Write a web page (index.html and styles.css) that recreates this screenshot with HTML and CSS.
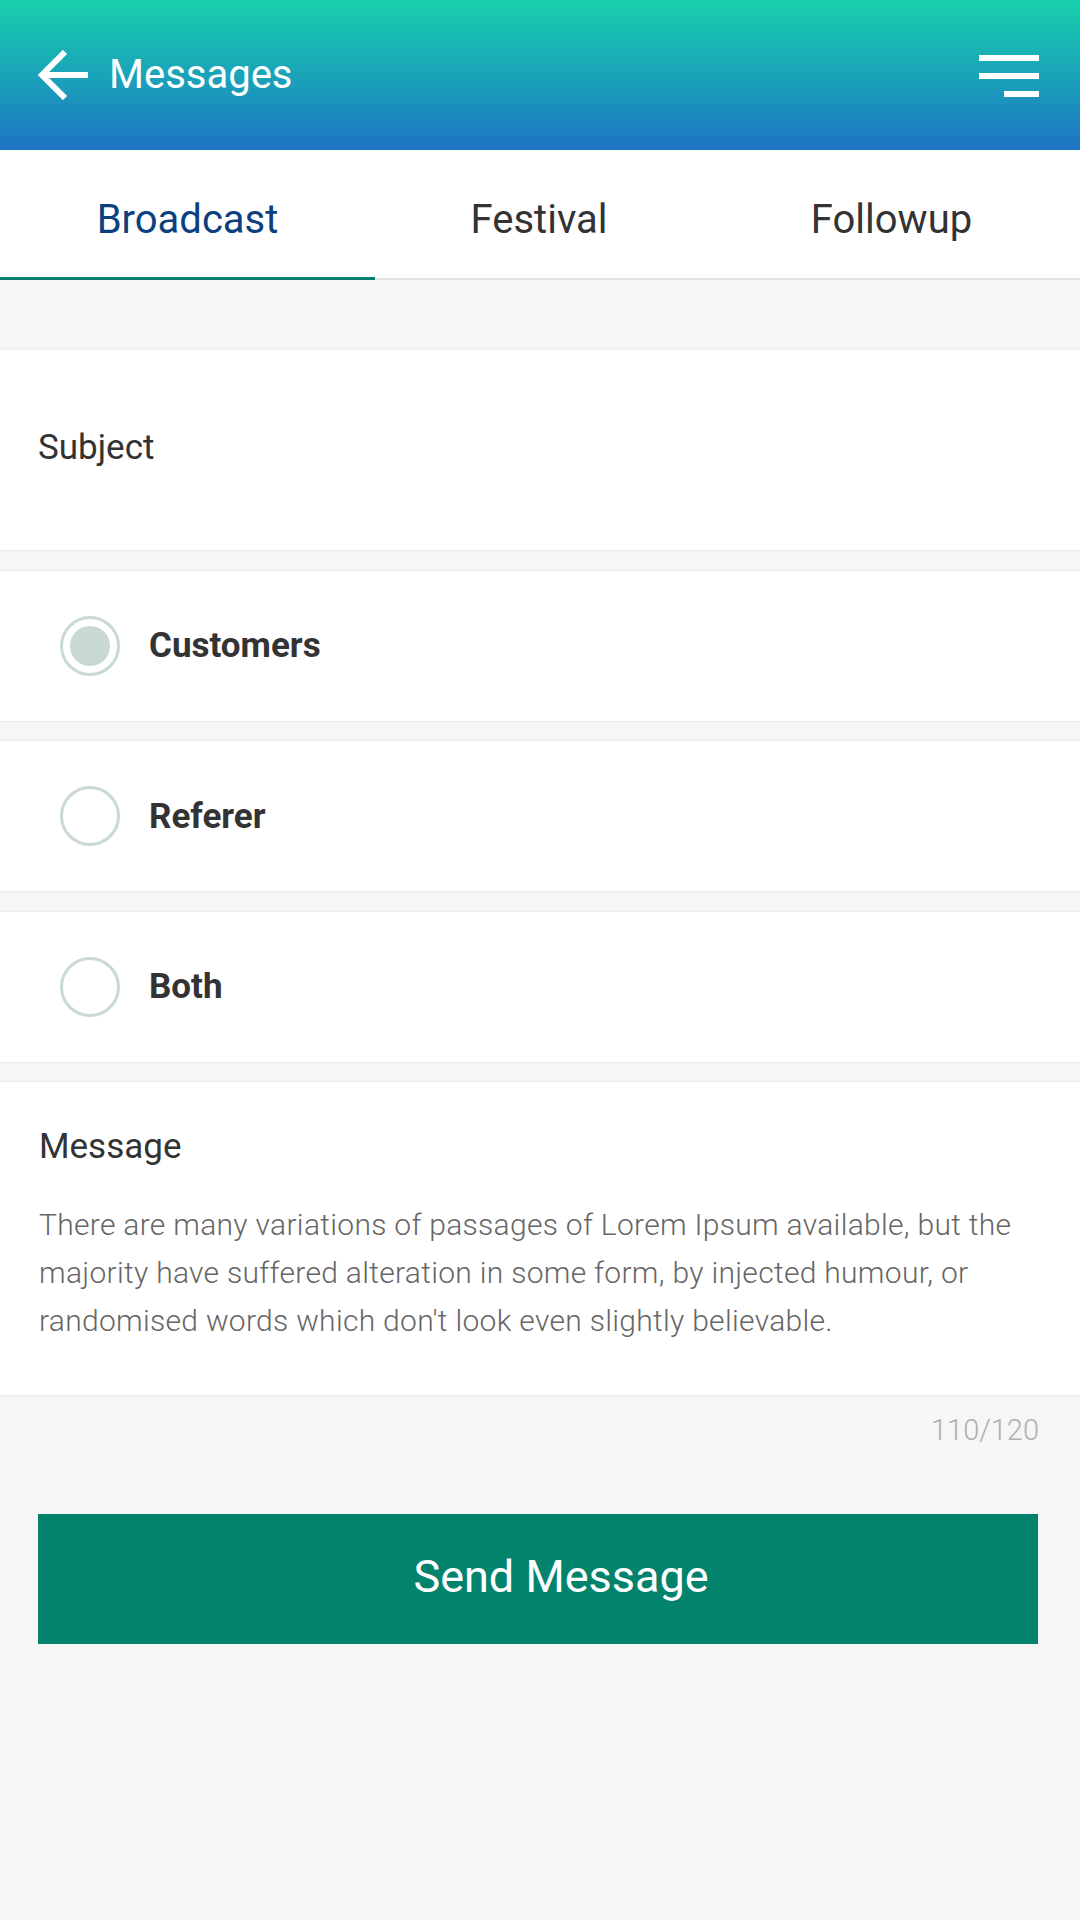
FILE: index.html
```html
<!DOCTYPE html>
<html lang="en">
<head>
<meta charset="utf-8">
<title>Messages</title>
<link rel="stylesheet" href="styles.css">
</head>
<body>
<div class="app">
  <header class="appbar">
    <svg class="back" width="50" height="50" viewBox="0 0 50 50" aria-hidden="true">
      <path d="M27 2 L4 25 L27 48 M4 25 L50 25" fill="none" stroke="#fff" stroke-width="6"/>
    </svg>
    <h1 class="title">Messages</h1>
    <div class="menu" aria-label="Menu">
      <span class="bar"></span>
      <span class="bar"></span>
      <span class="bar short"></span>
    </div>
  </header>

  <nav class="tabs">
    <div class="tab tab-1 active">Broadcast</div>
    <div class="tab tab-2">Festival</div>
    <div class="tab tab-3">Followup</div>
  </nav>

  <main class="content">
    <section class="card subject">Subject</section>

    <label class="card option">
      <span class="radio checked"><span class="dot"></span></span>
      <span class="option-label">Customers</span>
    </label>
    <label class="card option">
      <span class="radio"></span>
      <span class="option-label">Referer</span>
    </label>
    <label class="card option">
      <span class="radio"></span>
      <span class="option-label">Both</span>
    </label>

    <section class="card message">
      <div class="message-label">Message</div>
      <p class="message-text">There are many variations of passages of Lorem Ipsum available, but the majority have suffered alteration in some form, by injected humour, or randomised words which don't look even slightly believable.</p>
    </section>
  </main>

  <div class="counter">110/120</div>

  <button class="send">Send Message</button>
</div>
</body>
</html>
```

FILE: styles.css
```css
html, body {
  margin: 0;
  padding: 0;
}

body {
  width: 1080px;
  height: 1920px;
  background: #f6f6f6;
  font-family: Roboto, "Noto Sans", "Liberation Sans", sans-serif;
  color: #333333;
  overflow: hidden;
}

.app {
  display: flex;
  flex-direction: column;
}

/* App bar */
.appbar {
  height: 150px;
  display: flex;
  align-items: center;
  padding: 0 41px 0 38px;
  background: linear-gradient(180deg, #18d0ac 0%, #1a9fba 55%, #1e72c4 100%);
  box-sizing: border-box;
}

.back {
  display: block;
  width: 50px;
  height: 50px;
}

.title {
  margin: 0 0 0 21px;
  font-size: 40px;
  font-weight: 400;
  color: #ffffff;
  flex: 1;
  line-height: 1;
}

.menu {
  display: flex;
  flex-direction: column;
  align-items: flex-end;
  gap: 12px;
  width: 60px;
  margin-top: 2px;
}

.bar {
  display: block;
  width: 60px;
  height: 6px;
  background: #ffffff;
}

.bar.short {
  width: 35px;
}

/* Tabs */
.tabs {
  display: flex;
  height: 128px;
  background: #ffffff;
  border-bottom: 2px solid #e3e3e3;
}

.tab {
  position: relative;
  display: flex;
  align-items: center;
  justify-content: center;
  padding-top: 10px;
  box-sizing: border-box;
  font-size: 40px;
  color: #333333;
}

.tab-1 { width: 375px; }
.tab-2 { width: 328px; }
.tab-3 { width: 377px; }

.tab.active {
  color: #0c3f7e;
}

.tab.active::after {
  content: "";
  position: absolute;
  left: 0;
  right: 0;
  bottom: -2px;
  height: 3px;
  background: #047f6b;
}

/* Content */
.content {
  display: flex;
  flex-direction: column;
  gap: 20.5px;
  padding-top: 70px;
}

.card {
  background: #ffffff;
  box-shadow: 0 0 2px rgba(0, 0, 0, 0.12);
}

.subject {
  height: 200px;
  box-sizing: border-box;
  display: flex;
  align-items: center;
  padding: 0 0 5px 38px;
  font-size: 35px;
  color: #333333;
}

.option {
  height: 150px;
  display: flex;
  align-items: center;
  padding-left: 60px;
  gap: 29px;
}

.radio {
  width: 60px;
  height: 60px;
  box-sizing: border-box;
  border: 3px solid #c9d9d6;
  border-radius: 50%;
  display: flex;
  align-items: center;
  justify-content: center;
  flex: none;
}

.dot {
  width: 40px;
  height: 40px;
  border-radius: 50%;
  background: #c8d8d5;
}

.option-label {
  font-size: 35px;
  font-weight: 700;
  color: #333333;
}

.message {
  height: 313px;
  box-sizing: border-box;
  padding: 44px 30px 0 39px;
}

.message-label {
  font-size: 35px;
  color: #333333;
  line-height: 41px;
}

.message-text {
  margin: 34px 0 0;
  font-size: 30px;
  font-weight: 300;
  letter-spacing: 0.3px;
  line-height: 48px;
  color: #666666;
}

.counter {
  align-self: flex-end;
  margin: 18px 41px 0 0;
  font-size: 29px;
  font-weight: 300;
  color: #b0b0b0;
  line-height: 34px;
}

.send {
  margin: 67px 0 0 38px;
  width: 1000px;
  height: 130px;
  border: none;
  background: #04836c;
  color: #ffffff;
  font-family: Roboto, "Noto Sans", "Liberation Sans", sans-serif;
  font-size: 45px;
  font-weight: 400;
  padding: 0 0 6px 46px;
}
```
